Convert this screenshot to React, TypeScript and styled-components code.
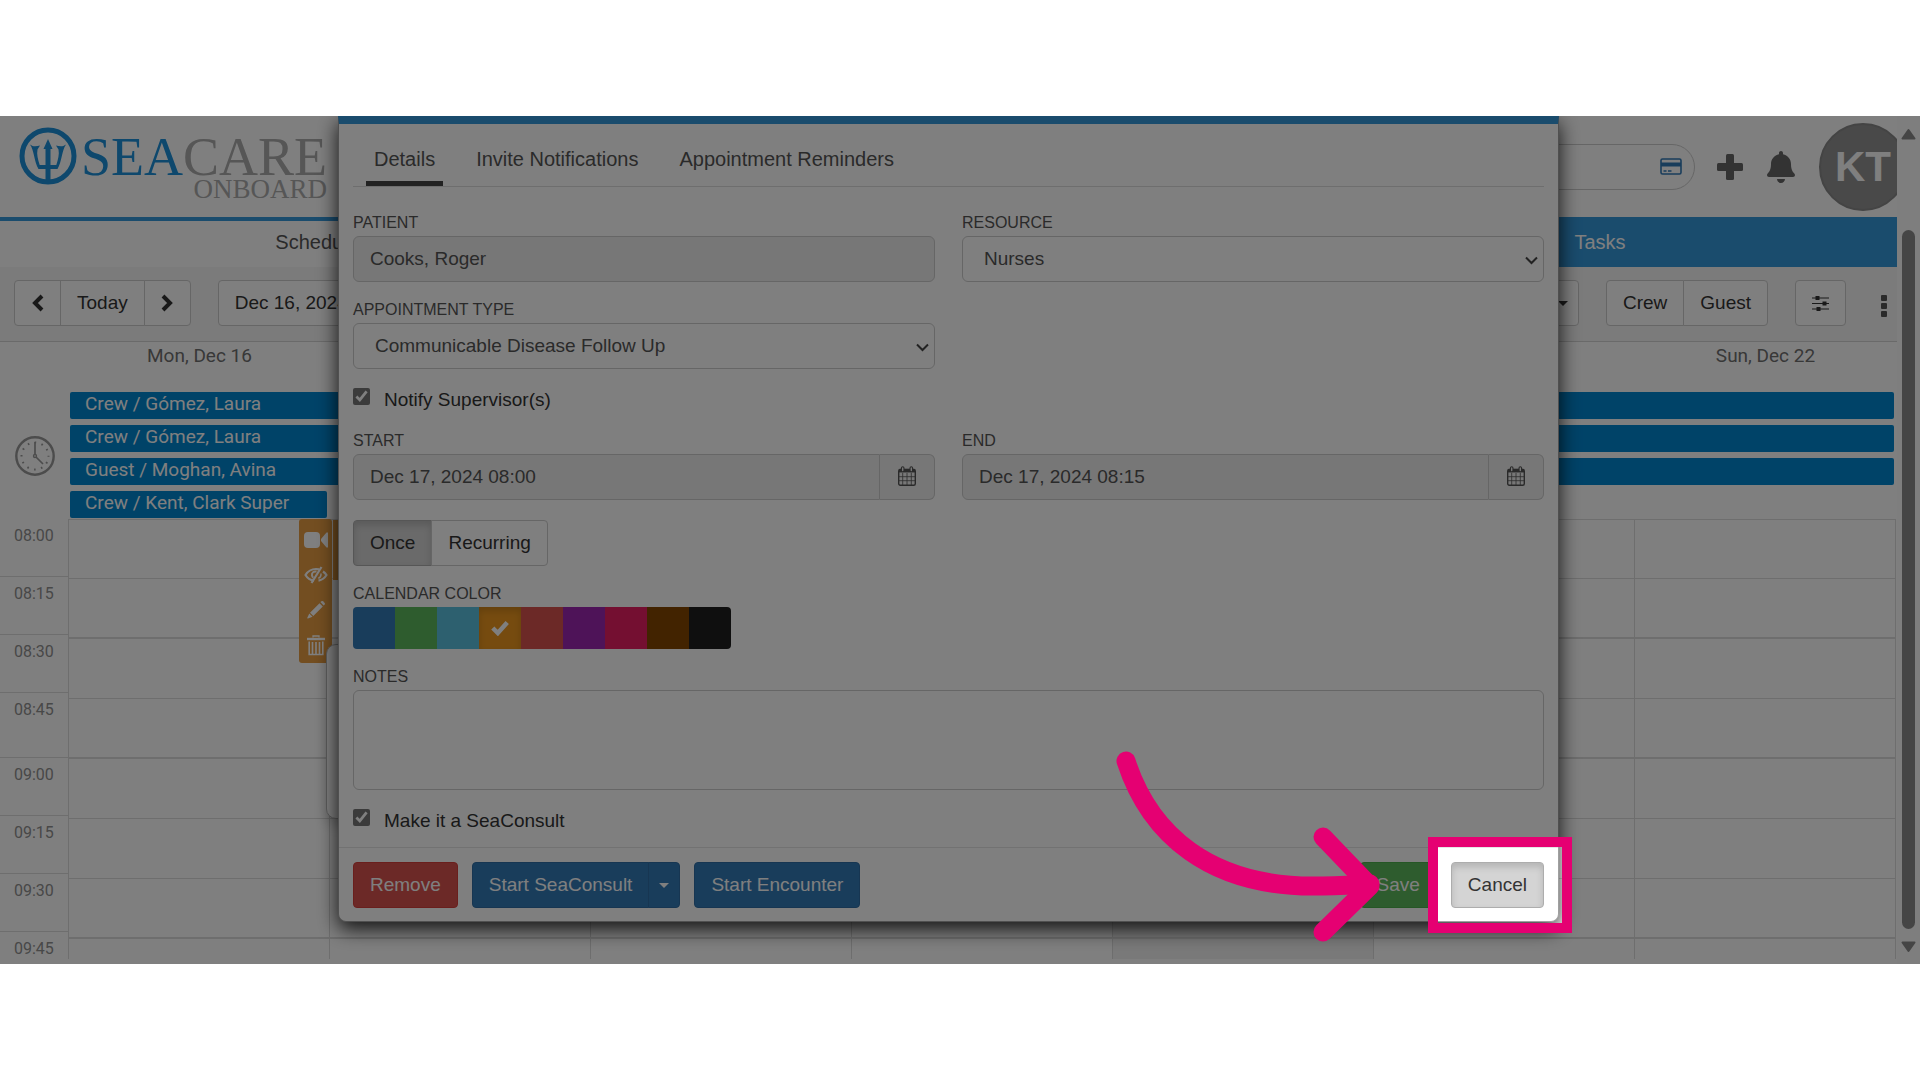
import React from "react";
import styled, { createGlobalStyle, css } from "styled-components";
import { FaBell } from "react-icons/fa";

const sans = `"Liberation Sans", Arial, sans-serif`;
const roboto = `Roboto, sans-serif`;
const serif = `"Liberation Serif", "Times New Roman", serif`;

const color = {
  brand: "#3498db",
  logo: "#1c90da",
  event: "#0086d1",
  line: "#dcdcdc",
  border: "#cccccc",
  text: "#333333",
  muted: "#555555",
  orange: "#e69c42",
  primary: "#337ab7",
  success: "#5cb85c",
  danger: "#d9534f",
  accent: "#e50072",
};

const GlobalStyle = createGlobalStyle`
  *, *::before, *::after { box-sizing: border-box; }
  body { margin: 0; background: #fff; font-family: ${sans}; font-size: 19px; color: ${color.text}; }
  button, input, select, textarea { font: inherit; color: inherit; margin: 0; }
`;

const Page = styled.div`
  min-height: 100vh;
  display: flex;
  flex-direction: column;
  justify-content: center;
`;

const Stage = styled.main`
  position: relative;
  display: flex;
  overflow: hidden;
`;

const Shell = styled.div`
  flex: 1;
  min-width: 0;
  overflow: hidden;
`;

/* ---------- header ---------- */

const Header = styled.header`
  display: flex;
  justify-content: space-between;
  align-items: center;
  height: 101px;
  padding-left: 19px;
`;

const Logo = styled.div`
  align-self: flex-start;
  display: flex;
  gap: 4px;
  padding-top: 11px;
  font-family: ${serif};
`;

const Wordmark = styled.div`
  display: flex;
  flex-direction: column;
  align-items: flex-end;
  padding-top: 8px;
  color: #acacac;
`;

const LogoName = styled.span`
  font-size: 54px;
  line-height: 45px;
`;

const LogoAccent = styled.span`
  color: ${color.logo};
`;

const LogoSub = styled.span`
  font-size: 27px;
  line-height: 18px;
`;

const HeaderTools = styled.div`
  display: flex;
  align-items: center;
  gap: 22px;
  margin-right: -10px;
`;

const SearchBox = styled.label`
  display: flex;
  align-items: center;
  width: 480px;
  height: 46px;
  padding: 0 12px;
  border: 1px solid ${color.border};
  border-radius: 23px;
`;

const SearchInput = styled.input`
  flex: 1;
  min-width: 0;
  border: 0;
  background: none;
  outline: 0;
`;

const PlainButton = styled.button`
  display: flex;
  align-items: center;
  justify-content: center;
  padding: 0;
  border: 0;
  background: none;
  color: #666;
`;

const Avatar = styled.button`
  width: 88px;
  height: 88px;
  padding: 0;
  border: 2px solid #888;
  border-radius: 50%;
  background: #929292;
  color: #fff;
  font-size: 42px;
  font-weight: 700;
`;

/* ---------- main tabs and toolbar ---------- */

const MainNav = styled.nav`
  display: grid;
  grid-template-columns: 634fr 669fr 594fr;
  height: 50px;
  background: ${color.brand};
`;

const NavLink = styled.a<{ $active?: boolean }>`
  display: flex;
  align-items: center;
  justify-content: center;
  border-top: 4px solid ${color.brand};
  padding-bottom: 4px;
  background: ${(p) => (p.$active ? "#fff" : color.brand)};
  color: ${(p) => (p.$active ? color.muted : "#fff")};
  font-size: 20px;
  text-decoration: none;
`;

const Toolbar = styled.div`
  display: flex;
  justify-content: space-between;
  padding: 13px 3px 15px 14px;
  border-bottom: 1px solid #d4d4d4;
  background: #f6f6f6;
`;

const ToolbarSide = styled.div`
  display: flex;
  align-items: center;
  gap: 27px;
`;

const tones = {
  plain: css`
    border-color: ${color.border};
    background: #fff;
    color: ${color.text};
  `,
  pressed: css`
    border-color: #adadad;
    background: #d4d4d4;
    color: ${color.text};
    box-shadow: inset 0 4px 7px rgba(0, 0, 0, 0.15);
  `,
  primary: css`
    border-color: #2e6da4;
    background: ${color.primary};
    color: #fff;
  `,
  success: css`
    border-color: #4cae4c;
    background: ${color.success};
    color: #fff;
  `,
  danger: css`
    border-color: #d43f3a;
    background: ${color.danger};
    color: #fff;
  `,
};

const Button = styled.button<{ $tone?: keyof typeof tones; $tight?: boolean }>`
  display: flex;
  align-items: center;
  justify-content: center;
  height: 46px;
  padding: 0 ${(p) => (p.$tight ? 10 : 16)}px;
  border: 1px solid;
  border-radius: 4px;
  white-space: nowrap;
  ${(p) => tones[p.$tone ?? "plain"]}
`;

const ButtonGroup = styled.div`
  display: flex;
  & > ${Button} + ${Button} {
    margin-left: -1px;
    border-top-left-radius: 0;
    border-bottom-left-radius: 0;
  }
  & > ${Button}:not(:last-child) {
    border-top-right-radius: 0;
    border-bottom-right-radius: 0;
  }
`;

const Caret = styled.span`
  border: 5px solid transparent;
  border-top-color: currentColor;
  border-bottom: 0;
`;

const Dots = styled(PlainButton)`
  flex-direction: column;
  gap: 2px;
  width: 21px;
  padding-top: 5px;
`;

const Dot = styled.span`
  width: 6px;
  height: 6px;
  border-radius: 1px;
  background: #555;
`;

/* ---------- calendar ---------- */

const DayHeads = styled.div`
  display: grid;
  grid-template-columns: repeat(7, 1fr);
  padding: 0 1px 0 69px;
`;

const DayHead = styled.div`
  height: 28px;
  font-family: ${roboto};
  line-height: 28px;
  text-align: center;
  color: #707070;
`;

const AllDay = styled.div`
  display: flex;
  align-items: center;
  padding-top: 22px;
`;

const ClockCell = styled.div`
  display: flex;
  justify-content: center;
  width: 69px;
`;

const BarList = styled.div`
  flex: 1;
  display: flex;
  flex-direction: column;
  gap: 6px;
  padding: 0 3px 1px 1px;
`;

const Bar = styled.div<{ $oneDay?: boolean }>`
  width: ${(p) => (p.$oneDay ? "calc(100% / 7 - 4px)" : "100%")};
  height: 27px;
  padding-left: 15px;
  border-radius: 2px;
  background: ${color.event};
  color: #fff;
  font-family: ${roboto};
  line-height: 23px;
  white-space: nowrap;
`;

const TimeGrid = styled.div`
  display: flex;
  height: 440px;
  margin-bottom: 5px;
  overflow: hidden;
`;

const TimeColumn = styled.div`
  width: 69px;
  border-right: 1px solid ${color.line};
`;

const TimeSlot = styled.div<{ $tall?: boolean }>`
  height: ${(p) => (p.$tall ? 65 : 58)}px;
  padding: 5px 0 0 14px;
  border-bottom: 1px solid ${color.line};
  color: #909090;
  font-family: ${roboto};
  font-size: 16px;
  line-height: 24px;
`;

const DayColumns = styled.div`
  flex: 1;
  display: grid;
  grid-template-columns: repeat(7, 1fr);
  padding-right: 1px;
`;

const DayColumn = styled.div<{ $today?: boolean }>`
  position: relative;
  border-top: 1px solid ${color.line};
  border-right: 1px solid ${color.line};
  background: ${(p) => (p.$today ? "#f3f3f3" : "#fff")};
`;

const Slot = styled.div<{ $strong?: boolean }>`
  height: 60px;
  border-bottom: ${(p) => (p.$strong ? "2px" : "1px")} solid ${color.line};
  &:first-child {
    height: 59px;
  }
`;

const Appointment = styled.div`
  position: absolute;
  top: 0;
  left: 3px;
  width: 240px;
  height: 60px;
  background: ${color.orange};
`;

const ActionStrip = styled.div`
  position: absolute;
  top: -1px;
  left: -31px;
  display: flex;
  flex-direction: column;
  align-items: center;
  justify-content: space-around;
  width: 33px;
  height: 144px;
  padding-top: 3px;
  border-radius: 3px;
  background: ${color.orange};
`;

const StripButton = styled(PlainButton)`
  height: 35px;
  color: #fff;
`;

const Popover = styled.div`
  position: absolute;
  top: 124px;
  left: -4px;
  width: 300px;
  height: 175px;
  border: 1px solid #b8b8b8;
  border-radius: 10px;
  background: #fff;
  box-shadow: 0 6px 13px rgba(0, 0, 0, 0.2);
`;

/* ---------- page scroll rail ---------- */

const Rail = styled.div`
  display: flex;
  flex-direction: column;
  align-items: center;
  gap: 12px;
  width: 23px;
  padding: 12px 0 11px;
  background: #fcfcfc;
`;

const RailThumb = styled.div`
  flex: 1;
  width: 13px;
  margin-top: 78px;
  border-radius: 7px;
  background: #8b8b8b;
`;

/* ---------- dialog ---------- */

const DialogLayer = styled.div`
  position: absolute;
  inset: 0 23px 0 0;
  display: flex;
  justify-content: center;
  align-items: flex-start;
`;

const Dialog = styled.section`
  width: min(1221px, 100% - 40px);
  border: 1px solid #a0a0a0;
  border-top: 8px solid ${color.brand};
  border-radius: 0 0 8px 8px;
  background: #fff;
  box-shadow: 0 7px 20px rgba(0, 0, 0, 0.85);
`;

const TabBar = styled.div`
  display: flex;
  gap: 25px;
  margin: 0 14px;
  padding-left: 13px;
  border-bottom: 1px solid ${color.line};
`;

const Tab = styled.button<{ $active?: boolean }>`
  padding: 23px 8px 10px;
  border: 0;
  border-bottom: 5px solid ${(p) => (p.$active ? "#444" : "transparent")};
  background: none;
  color: ${color.muted};
  font-size: 20px;
  line-height: 24px;
`;

const Form = styled.form`
  padding: 24px 14px 13px;
`;

const FieldGrid = styled.div`
  display: grid;
  grid-template-columns: 1fr 1fr;
  gap: 16px 27px;
`;

const Field = styled.div`
  display: flex;
  flex-direction: column;
`;

const Caption = styled.label`
  margin-bottom: 2px;
  font-size: 16px;
  line-height: 23px;
  color: ${color.muted};
  text-transform: uppercase;
`;

const control = css`
  width: 100%;
  height: 46px;
  border: 1px solid ${color.border};
  border-radius: 6px;
  background: #fff;
  color: ${color.muted};
  outline: 0;
`;

const TextInput = styled.input`
  ${control}
  padding: 0 16px 1px;
  &:read-only {
    background: #eee;
  }
`;

const SelectWrap = styled.div`
  position: relative;
`;

const Select = styled.select`
  ${control}
  appearance: none;
  padding: 0 30px 2px 21px;
`;

const SelectArrow = styled.svg`
  position: absolute;
  right: 6px;
  top: 20px;
  pointer-events: none;
`;

const InputGroup = styled.div`
  display: flex;
  ${TextInput} {
    flex: 1;
    min-width: 0;
    border-top-right-radius: 0;
    border-bottom-right-radius: 0;
  }
`;

const Addon = styled.button`
  display: flex;
  align-items: center;
  justify-content: center;
  width: 55px;
  padding: 0 0 3px;
  border: 1px solid ${color.border};
  border-left: 0;
  border-radius: 0 6px 6px 0;
  background: #eee;
  color: ${color.muted};
`;

const CheckLabel = styled.label`
  display: flex;
  align-items: flex-start;
  gap: 14px;
  margin: 18px 0 16px;
  line-height: 26px;
  &:last-child {
    margin-bottom: 0;
  }
`;

const CheckBox = styled.input`
  && {
    width: 17px;
    height: 17px;
    margin: 1px 0 0;
    accent-color: #767676;
  }
`;

const Repeat = styled.div`
  display: flex;
  margin: 20px 0 16px;
`;

const Swatches = styled.div`
  display: flex;
  width: max-content;
  margin-bottom: 16px;
  border-radius: 4px;
  overflow: hidden;
`;

const Swatch = styled.button<{ $fill: string; $picked?: boolean }>`
  display: flex;
  align-items: center;
  justify-content: center;
  width: 42px;
  height: 42px;
  padding: 0;
  border: 0;
  background: ${(p) => p.$fill};
  color: #fff;
  box-shadow: ${(p) => (p.$picked ? "inset 0 4px 7px rgba(0, 0, 0, 0.15)" : "none")};
`;

const Notes = styled.textarea`
  ${control}
  display: block;
  height: 100px;
  padding: 10px 16px;
  resize: none;
`;

const Footer = styled.footer`
  display: flex;
  gap: 14px;
  padding: 14px 14px 13px;
  border-top: 1px solid #e5e5e5;
`;

const Spacer = styled.div`
  flex: 1;
`;

/* The guided step: frame and arrow hang on the Cancel button */
const Guided = styled.div`
  position: relative;
`;

const Spotlight = styled.div`
  position: absolute;
  inset: -25px -28px -25px -23px;
  border: 10px solid ${color.accent};
  box-shadow: 0 0 0 3000px rgba(0, 0, 0, 0.5);
  pointer-events: none;
`;

const GuideArrow = styled.svg`
  position: absolute;
  right: calc(100% + 60px);
  top: -120px;
  pointer-events: none;
`;

/* ---------- drawings ---------- */

const Trident = () => (
  <svg width="58" height="58" viewBox="0 0 58 58" fill="none" stroke={color.logo}>
    <circle cx="29" cy="29" r="26" strokeWidth="5" />
    <path d="M29 20V56" strokeWidth="5" />
    <path d="M29 12l4.500 10h-9z" fill={color.logo} stroke="none" />
    <path
      d="M11 17.500c4 3 7 1.500 10 1l-2.500 4c-1 5 .5 10 2.200 15.500h16.600c1.700-5.500 3.200-10.500 2.200-15.500l-2.500-4c3 .5 6 2 10-1-4 5-4 17-8.500 24.500H19.500C15 34.500 15 22.500 11 17.500z"
      fill={color.logo}
      stroke="none"
    />
  </svg>
);

const CardIcon = () => (
  <svg width="22" height="17" viewBox="0 0 22 17" fill="none" stroke={color.primary}>
    <rect x="1" y="1" width="20" height="15" rx="1.5" strokeWidth="1.6" />
    <path d="M1 6.500h20" strokeWidth="4" />
    <path d="M3.500 13h3M8 13h3.500" strokeWidth="1.5" />
  </svg>
);

const PlusIcon = () => (
  <svg width="26" height="26" viewBox="0 0 26 26" fill="currentColor">
    <rect x="9" y="0" width="8" height="26" rx="1.500" />
    <rect x="0" y="9" width="26" height="8" rx="1.500" />
  </svg>
);

const Chevron = ({ right }: { right?: boolean }) => (
  <svg width="13" height="18" viewBox="0 0 13 18" fill="none" stroke="currentColor" strokeWidth="4">
    <path d={right ? "M2 2l7 7-7 7" : "M11 2L4 9l7 7"} />
  </svg>
);

const CheckMark = () => (
  <svg width="18" height="16" viewBox="0 0 18 16" fill="none" stroke="currentColor" strokeWidth="4.500">
    <path d="M1.800 8l5 5L16.200 2.500" />
  </svg>
);

const SlidersIcon = () => (
  <svg width="17" height="17" viewBox="0 0 17 17" fill="#333" stroke="#333">
    <path d="M0 3h17M0 8.500h17M0 14h17" strokeWidth="1.2" />
    <rect x="4" y="1.500" width="3" height="3" />
    <rect x="11" y="7" width="3" height="3" />
    <rect x="5" y="12.500" width="3" height="3" />
  </svg>
);

const ClockIcon = () => (
  <svg width="40" height="40" viewBox="0 0 40 40" fill="none" stroke="#999">
    <circle cx="20" cy="20" r="18.700" strokeWidth="2.400" />
    <circle cx="20" cy="20" r="13.500" strokeWidth="2" strokeDasharray="1.600 5.470" strokeDashoffset="0.800" />
    <circle cx="20" cy="20" r="1.500" strokeWidth="1.400" />
    <path d="M20 6v12.500M21 21l7 7" strokeWidth="1.700" />
  </svg>
);

const VideoIcon = () => (
  <svg width="24" height="18" viewBox="0 0 24 18" fill="currentColor">
    <rect x="0" y="1" width="16" height="16" rx="4" />
    <path d="M17 8l5.500-6.500H24v15h-1.500L17 10z" />
  </svg>
);

const EyeOffIcon = () => (
  <svg width="24" height="18" viewBox="0 0 24 18" fill="none" stroke="currentColor">
    <path d="M10 14.600C6 14 3 11.500 1.500 9 4 5 7.500 3 12 3c1 0 2 .1 3 .3M19 5.500c1.500 1 2.700 2.200 3.500 3.500-1.800 3-4.500 5-8 5.600" strokeWidth="2.200" />
    <path d="M17.500 1L7.500 17" strokeWidth="2.200" />
    <path d="M12.500 5.500C9.500 5 7.500 7 8 9.500c.2 1 .7 1.700 1.300 2.200" strokeWidth="2" />
    <path d="M17 7.500c.2 2-.8 4-2.700 4.800" strokeWidth="1.500" />
  </svg>
);

const PencilIcon = () => (
  <svg width="18" height="18" viewBox="0 0 18 18" fill="currentColor">
    <path d="M13.500 1.200l1-.9c.5-.4 1-.4 1.500 0l1.700 1.700c.4.500.4 1 0 1.500l-1 1z" />
    <path d="M12.500 2.200l3.300 3.300-9.500 9.500L3 11.700zM2.300 12.500l3.200 3.200L1 17.500c-.6.200-.9-.1-.7-.7z" />
  </svg>
);

const TrashIcon = () => (
  <svg width="18" height="21" viewBox="0 0 18 21" fill="none" stroke="currentColor">
    <path d="M6 2.500V1h6v1.500" strokeWidth="1.300" />
    <path d="M0 4h18" strokeWidth="2.400" />
    <path d="M2.200 6.500v13h13.600v-13" strokeWidth="1.600" />
    <path d="M5.500 7v12M9 7v12M12.500 7v12" strokeWidth="1.600" />
  </svg>
);

const CalendarIcon = () => (
  <svg width="18" height="20" viewBox="0 0 18 20" fill="none" stroke="currentColor">
    <rect x=".7" y="3.500" width="16.600" height="15.700" rx="1.500" strokeWidth="1.400" />
    <path d="M1 4.700h16" strokeWidth="3.500" />
    <path d="M1 10.700h16M1 14.700h16M4.700 7v12M9 7v12M13.300 7v12" strokeWidth=".8" />
    <path d="M4.700 2v2.500M13.300 2v2.500" strokeWidth="3.600" strokeLinecap="round" />
    <path d="M4.700 2v2.500M13.300 2v2.500" stroke="#eee" strokeWidth="1.400" strokeLinecap="round" />
  </svg>
);

const RailArrow = ({ down }: { down?: boolean }) => (
  <svg width="15" height="12" viewBox="0 0 15 12" fill="#8b8b8b" stroke="#8b8b8b" strokeLinejoin="round">
    <path d={down ? "M1.500 1.500h12l-6 8.500z" : "M1.500 10.500h12L7.500 2z"} strokeWidth="2" />
  </svg>
);

/* ---------- data ---------- */

const days = ["Mon, Dec 16", "", "", "", "", "", "Sun, Dec 22"];

const allDayEvents = [
  { title: "Crew / Gómez, Laura" },
  { title: "Crew / Gómez, Laura" },
  { title: "Guest / Moghan, Avina" },
  { title: "Crew / Kent, Clark Super", oneDay: true },
];

const slots = [
  { time: "08:00" },
  { time: "08:15", strong: true },
  { time: "08:30" },
  { time: "08:45", strong: true, tall: true },
  { time: "09:00" },
  { time: "09:15" },
  { time: "09:30", strong: true },
  { time: "09:45" },
];

const swatches = [
  { name: "Blue", fill: "#337ab7" },
  { name: "Green", fill: "#5cb85c" },
  { name: "Cyan", fill: "#5bc0de" },
  { name: "Orange", fill: "#ec971f" },
  { name: "Red", fill: "#d9534f" },
  { name: "Purple", fill: "#9c27b0" },
  { name: "Pink", fill: "#e91e63" },
  { name: "Brown", fill: "#854600" },
  { name: "Black", fill: "#1f1f1f" },
];

/* ---------- parts ---------- */

const SelectField = ({ id, label, value }: { id: string; label: string; value: string }) => (
  <Field>
    <Caption htmlFor={id}>{label}</Caption>
    <SelectWrap>
      <Select id={id} defaultValue={value}>
        <option>{value}</option>
      </Select>
      <SelectArrow width="13" height="9" viewBox="0 0 13 9" fill="none" stroke="#444" strokeWidth="2">
        <path d="M1 1.500l5.500 5.500L12 1.500" />
      </SelectArrow>
    </SelectWrap>
  </Field>
);

const DateField = ({ id, label, value }: { id: string; label: string; value: string }) => (
  <Field>
    <Caption htmlFor={id}>{label}</Caption>
    <InputGroup>
      <TextInput id={id} readOnly value={value} />
      <Addon type="button" aria-label={`${label} calendar`}>
        <CalendarIcon />
      </Addon>
    </InputGroup>
  </Field>
);

const Calendar = () => (
  <>
    <DayHeads>
      {days.map((d, i) => (
        <DayHead key={i}>{d}</DayHead>
      ))}
    </DayHeads>
    <AllDay>
      <ClockCell>
        <ClockIcon />
      </ClockCell>
      <BarList>
        {allDayEvents.map((e, i) => (
          <Bar key={i} $oneDay={e.oneDay}>
            {e.title}
          </Bar>
        ))}
      </BarList>
    </AllDay>
    <TimeGrid>
      <TimeColumn>
        {slots.map((s) => (
          <TimeSlot key={s.time} $tall={s.tall}>
            {s.time}
          </TimeSlot>
        ))}
      </TimeColumn>
      <DayColumns>
        {days.map((_, i) => (
          <DayColumn key={i} $today={i === 4}>
            {slots.map((s) => (
              <Slot key={s.time} $strong={s.strong} />
            ))}
            {i === 1 && (
              <>
                <Appointment />
                <ActionStrip>
                  <StripButton aria-label="Video"><VideoIcon /></StripButton>
                  <StripButton aria-label="Hide"><EyeOffIcon /></StripButton>
                  <StripButton aria-label="Edit"><PencilIcon /></StripButton>
                  <StripButton aria-label="Delete"><TrashIcon /></StripButton>
                </ActionStrip>
                <Popover />
              </>
            )}
          </DayColumn>
        ))}
      </DayColumns>
    </TimeGrid>
  </>
);

const AppointmentDialog = () => (
  <Dialog role="dialog" aria-label="Appointment">
    <TabBar role="tablist">
      <Tab role="tab" $active>Details</Tab>
      <Tab role="tab">Invite Notifications</Tab>
      <Tab role="tab">Appointment Reminders</Tab>
    </TabBar>
    <Form>
      <FieldGrid>
        <Field>
          <Caption htmlFor="patient">Patient</Caption>
          <TextInput id="patient" readOnly value="Cooks, Roger" />
        </Field>
        <SelectField id="resource" label="Resource" value="Nurses" />
        <SelectField id="type" label="Appointment Type" value="Communicable Disease Follow Up" />
      </FieldGrid>
      <CheckLabel>
        <CheckBox type="checkbox" defaultChecked />
        Notify Supervisor(s)
      </CheckLabel>
      <FieldGrid>
        <DateField id="start" label="Start" value="Dec 17, 2024 08:00" />
        <DateField id="end" label="End" value="Dec 17, 2024 08:15" />
      </FieldGrid>
      <Repeat>
        <ButtonGroup>
          <Button type="button" $tone="pressed">Once</Button>
          <Button type="button">Recurring</Button>
        </ButtonGroup>
      </Repeat>
      <Field>
        <Caption as="span">Calendar Color</Caption>
        <Swatches>
          {swatches.map((s) => (
            <Swatch key={s.name} type="button" aria-label={s.name} $fill={s.fill} $picked={s.name === "Orange"}>
              {s.name === "Orange" && <CheckMark />}
            </Swatch>
          ))}
        </Swatches>
      </Field>
      <Field>
        <Caption htmlFor="notes">Notes</Caption>
        <Notes id="notes" />
      </Field>
      <CheckLabel>
        <CheckBox type="checkbox" defaultChecked />
        Make it a SeaConsult
      </CheckLabel>
    </Form>
    <Footer>
      <Button $tone="danger">Remove</Button>
      <ButtonGroup>
        <Button $tone="primary">Start SeaConsult</Button>
        <Button $tone="primary" $tight aria-label="More start options">
          <Caret />
        </Button>
      </ButtonGroup>
      <Button $tone="primary">Start Encounter</Button>
      <Spacer />
      <Button $tone="success">Save</Button>
      <Guided>
        <Button $tone="pressed">Cancel</Button>
        <Spotlight />
        <GuideArrow width="280" height="210" viewBox="0 0 280 210" fill="none" stroke={color.accent} strokeWidth="19" strokeLinecap="round" strokeLinejoin="round">
          <path d="M15 19C39 93 99 144 202 144C224 144 239 143 259 142" />
          <path d="M212 95L259 144L212 190" />
        </GuideArrow>
      </Guided>
    </Footer>
  </Dialog>
);

export default function App() {
  return (
    <Page>
      <GlobalStyle />
      <Stage>
        <Shell>
          <Header>
            <Logo>
              <Trident />
              <Wordmark>
                <LogoName>
                  <LogoAccent>SEA</LogoAccent>CARE
                </LogoName>
                <LogoSub>ONBOARD</LogoSub>
              </Wordmark>
            </Logo>
            <HeaderTools>
              <SearchBox>
                <SearchInput aria-label="Search" />
                <CardIcon />
              </SearchBox>
              <PlainButton aria-label="Add"><PlusIcon /></PlainButton>
              <PlainButton aria-label="Notifications"><FaBell size={32} /></PlainButton>
              <Avatar>KT</Avatar>
            </HeaderTools>
          </Header>
          <MainNav>
            <NavLink href="#schedule" $active>Schedule</NavLink>
            <span />
            <NavLink href="#tasks">Tasks</NavLink>
          </MainNav>
          <Toolbar>
            <ToolbarSide>
              <ButtonGroup>
                <Button aria-label="Previous"><Chevron /></Button>
                <Button>Today</Button>
                <Button aria-label="Next"><Chevron right /></Button>
              </ButtonGroup>
              <Button>Dec 16, 2024</Button>
            </ToolbarSide>
            <ToolbarSide>
              <Button $tight aria-label="View"><Caret /></Button>
              <ButtonGroup>
                <Button>Crew</Button>
                <Button>Guest</Button>
              </ButtonGroup>
              <Button aria-label="Filters"><SlidersIcon /></Button>
              <Dots aria-label="More">
                <Dot />
                <Dot />
                <Dot />
              </Dots>
            </ToolbarSide>
          </Toolbar>
          <Calendar />
        </Shell>
        <Rail aria-hidden>
          <RailArrow />
          <RailThumb />
          <RailArrow down />
        </Rail>
        <DialogLayer>
          <AppointmentDialog />
        </DialogLayer>
      </Stage>
    </Page>
  );
}
